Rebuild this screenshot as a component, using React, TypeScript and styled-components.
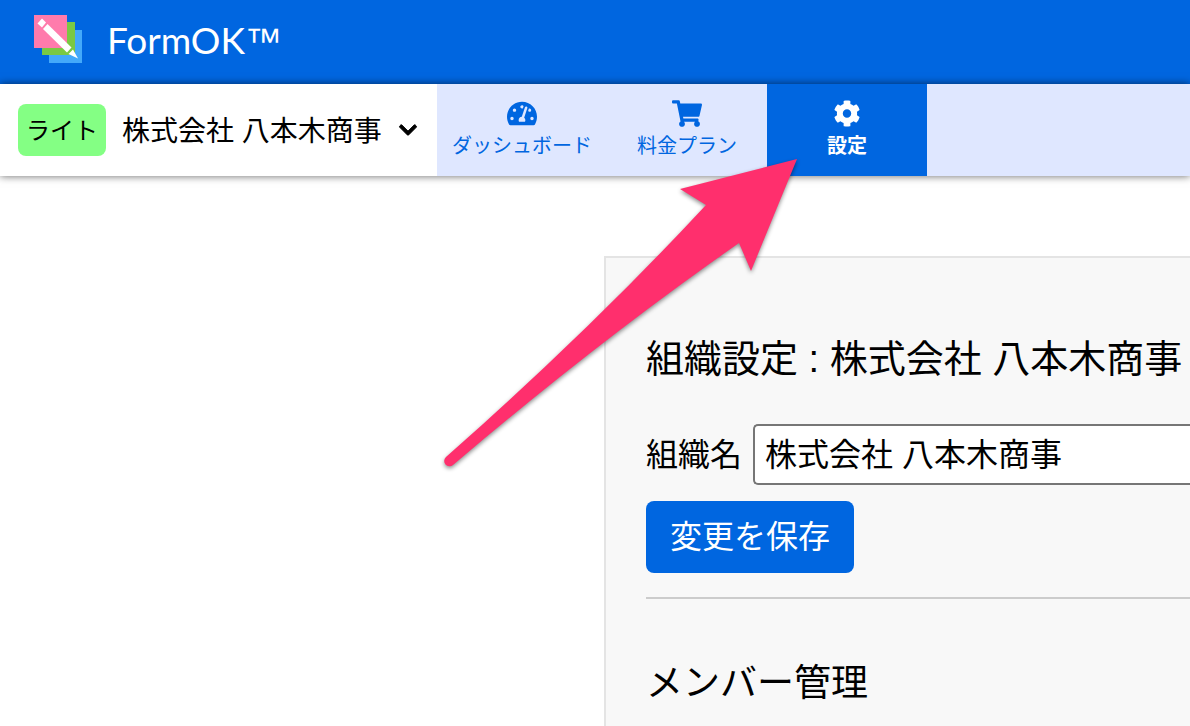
import React from 'react';
import styled, { createGlobalStyle } from 'styled-components';
import { FaTachometerAlt, FaShoppingCart, FaCog, FaChevronDown } from 'react-icons/fa';

const blue = '#0066e0';

const GlobalStyle = createGlobalStyle`
  * { box-sizing: border-box; }
  body {
    margin: 0;
    background: #fff;
    color: #000;
    font-family: "Liberation Sans", "Noto Sans CJK JP", sans-serif;
    overflow-x: hidden;
  }
`;

const Page = styled.div`
  position: relative;
  display: flex;
  flex-direction: column;
  min-height: 100vh;
`;

const Header = styled.header`
  display: flex;
  align-items: center;
  height: 84px;
  padding: 0 34px 2px;
  background: ${blue};
`;

const Brand = styled.a`
  display: flex;
  align-items: center;
  gap: 24px;
  color: #fff;
  text-decoration: none;
  font-family: Lato, sans-serif;
  font-size: 37px;
  line-height: 44px;
`;

const TradeMark = styled.span`
  font-family: "Liberation Sans", sans-serif;
`;

const Logo = styled.svg`
  display: block;
  width: 49px;
  height: 49px;
  margin-bottom: 4px;
`;

const NavBar = styled.nav`
  position: relative;
  display: flex;
  height: 92px;
  background: #dfe7ff;
  box-shadow: 0 0 8px rgba(0, 0, 0, 0.6);
`;

const OrgSwitcher = styled.button`
  display: flex;
  align-items: center;
  width: 437px;
  padding: 0 18px;
  border: 0;
  background: #fff;
  color: #000;
  font: inherit;
  font-size: 28px;
  line-height: 40px;
  white-space: nowrap;
  svg {
    width: 20px;
    height: 20px;
    margin-left: 16px;
    stroke: currentColor;
    stroke-width: 24px;
  }
`;

const OrgName = styled.span`
  padding-top: 4px;
`;

const PlanBadge = styled.span`
  margin-right: 16px;
  padding: 9px 8px 7px;
  border-radius: 8px;
  background: #84ff84;
  font-size: 24px;
  line-height: 36px;
`;

const NavItem = styled.a<{ $active?: boolean }>`
  display: flex;
  flex-direction: column;
  align-items: center;
  gap: 5px;
  min-width: 160px;
  padding: 16px 15px 0;
  background: ${(p) => (p.$active ? blue : 'transparent')};
  color: ${(p) => (p.$active ? '#fff' : blue)};
  font-size: 20px;
  font-weight: ${(p) => (p.$active ? 700 : 400)};
  line-height: 28px;
  text-decoration: none;
  white-space: nowrap;
  svg {
    width: 30px;
    height: 27px;
  }
`;

const Main = styled.main`
  display: flex;
  flex: 1;
  padding: 80px 0 0 604px;
`;

const Panel = styled.section`
  flex: 1;
  min-width: 0;
  padding: 73px 0 0 40px;
  border: 2px solid #e4e4e4;
  border-width: 2px 0 0 2px;
  background: #f8f8f8;
`;

const Title = styled.h2`
  margin: 0;
  font-size: 38px;
  font-weight: 400;
  line-height: 56px;
  white-space: nowrap;
`;

const SectionTitle = styled.h3`
  margin: 0;
  font-size: 37px;
  font-weight: 400;
  line-height: 56px;
`;

const Field = styled.div`
  display: flex;
  align-items: center;
  gap: 11px;
  margin: 37px 0 16px;
  font-size: 32px;
  line-height: 48px;
  label { flex: none; }
`;

const TextInput = styled.input`
  flex: 1;
  min-width: 0;
  height: 61px;
  padding: 0 10px 5px;
  border: 2px solid #767676;
  border-right: 0;
  border-radius: 5px 0 0 5px;
  background: #fff;
  color: #000;
  font: inherit;
`;

const SaveButton = styled.button`
  display: block;
  padding: 12px 24px;
  border: 0;
  border-radius: 8px;
  background: ${blue};
  color: #fff;
  font: inherit;
  font-size: 32px;
  line-height: 48px;
`;

const Divider = styled.hr`
  height: 2px;
  margin: 24px 0 57px;
  border: 0;
  background: #ccc;
`;

const Pointer = styled.svg`
  position: absolute;
  top: 150px;
  left: 430px;
  width: 380px;
  height: 330px;
  pointer-events: none;
  filter: drop-shadow(0 2px 2px rgba(0, 0, 0, 0.45));
`;

export default function App() {
  return (
    <>
      <GlobalStyle />
      <Page>
        <Header>
          <Brand href="#">
            <Logo viewBox="0 0 49 49" aria-hidden="true">
              <rect x="15" y="15" width="33" height="33" fill="#43a9fa" />
              <rect x="8" y="7" width="33" height="33" fill="#7ac943" />
              <rect width="33" height="33" fill="#ff7bac" />
              <g fill="#fff">
                <path d="M8 3.500 12 7.500 8 12.500 3.500 8.500Z" />
                <path d="M13.500 9 37.500 32.500 33 37.500 9 14Z" />
                <path d="M39 34.500 44 43.500 34.500 39Z" />
              </g>
            </Logo>
            <span>
              FormOK<TradeMark>™</TradeMark>
            </span>
          </Brand>
        </Header>
        <NavBar>
          <OrgSwitcher type="button">
            <PlanBadge>ライト</PlanBadge>
            <OrgName>株式会社 八本木商事</OrgName>
            <FaChevronDown aria-hidden="true" />
          </OrgSwitcher>
          <NavItem href="#dashboard">
            <FaTachometerAlt aria-hidden="true" />
            ダッシュボード
          </NavItem>
          <NavItem href="#plans">
            <FaShoppingCart aria-hidden="true" />
            料金プラン
          </NavItem>
          <NavItem href="#settings" $active aria-current="page">
            <FaCog aria-hidden="true" />
            設定
          </NavItem>
        </NavBar>
        <Main>
          <Panel>
            <Title>組織設定 : 株式会社 八本木商事</Title>
            <Field>
              <label htmlFor="org-name">組織名</label>
              <TextInput id="org-name" type="text" defaultValue="株式会社 八本木商事" />
            </Field>
            <SaveButton type="button">変更を保存</SaveButton>
            <Divider />
            <SectionTitle>メンバー管理</SectionTitle>
          </Panel>
        </Main>
        <Pointer viewBox="430 150 380 330" aria-hidden="true">
          <path
            fill="#ff2f6d"
            d="M797 159 680 189 706 205Q590 330 446 457A5.200 5.200 0 0 0 453 465Q600 340 739 243L751 271Z"
          />
        </Pointer>
      </Page>
    </>
  );
}
